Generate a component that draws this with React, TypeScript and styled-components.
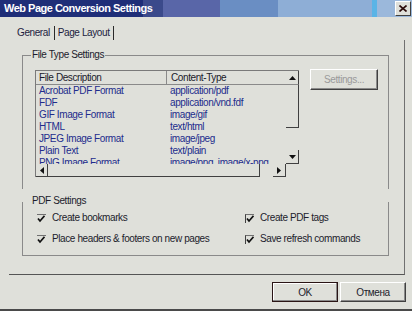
import React from 'react';
import styled, { createGlobalStyle } from 'styled-components';

const GlobalStyle = createGlobalStyle`
  html, body { margin: 0; padding: 0; background: #dfe0da; }
  body { font-family: "Liberation Sans", Arial, sans-serif; font-size: 10px; }
  * { box-sizing: border-box; }
`;

const Window = styled.div`
  width: 412px;
  height: 311px;
  display: flex;
  flex-direction: column;
  background: #dfe0da;
  border-bottom: 2px solid #4a4a4a;
  overflow: hidden;
  color: #1d1d2b;
  letter-spacing: -0.4px;
`;

const TitleBar = styled.div`
  height: 17px;
  flex: none;
  display: flex;
  align-items: flex-start;
  background: linear-gradient(
    to right,
    #1f2e78 0 143px,
    #3b4a8b 143px 163px,
    #5966a8 163px 220px,
    #6a8ec3 220px 278px,
    #8eaed6 278px 372px,
    #5ab4e6 372px 377px,
    #9bb8db 377px
  );
`;

const Title = styled.div`
  flex: 1;
  padding-left: 4px;
  line-height: 17px;
  color: #ffffff;
  font-weight: bold;
  font-size: 11px;
  letter-spacing: -0.5px;
`;

const CloseButton = styled.button`
  width: 16px;
  height: 15px;
  margin: 1px 1px 0 0;
  padding: 0;
  background: #dfe0da;
  border: 1px solid;
  border-color: #ffffff #404040 #404040 #ffffff;
  display: flex;
  align-items: center;
  justify-content: center;
`;

const TabStrip = styled.div`
  height: 23px;
  flex: none;
  display: flex;
  align-items: flex-end;
  padding-left: 17px;
`;

const Tab = styled.div`
  height: 14px;
  line-height: 14px;
  padding: 0 3px;
  border-right: 1px solid #2a2a2a;
  color: #1c1c40;
  &:first-child { padding: 0 4px 0 0; }
`;

const Panel = styled.div`
  margin-left: 9px;
  width: 396px;
  height: 235px;
  flex: none;
  border-right: 1px solid #707070;
  border-bottom: 1px solid #555555;
  padding: 15px 15px 0 13px;
  display: flex;
  flex-direction: column;
`;

const GroupBox = styled.div<{ $open: 'top' | 'bottom'; $height: number; $gap?: number }>`
  height: ${p => p.$height}px;
  margin-top: ${p => p.$gap ?? 0}px;
  border: 1px solid #8a8a8a;
  ${p => (p.$open === 'bottom' ? 'border-bottom: none;' : 'border-top: none;')}
  display: flex;
  flex-direction: column;
`;

const Caption = styled.div`
  align-self: flex-start;
  margin: -7px 0 0 8px;
  padding: 0 1px;
  line-height: 12px;
  background: #dfe0da;
  color: #1c1c2c;
`;

const FileTypeBody = styled.div`
  display: flex;
  align-items: flex-start;
  gap: 11px;
  margin-top: 9px;
  padding-left: 12px;
`;

const ListBox = styled.div`
  width: 264px;
  height: 107px;
  display: grid;
  grid-template-columns: 1fr 13px;
  grid-template-rows: 1fr 13px;
  border-top: 1px solid #7a7a7a;
  border-left: 1px solid #7a7a7a;
`;

const ListMain = styled.div`
  overflow: hidden;
  display: flex;
  flex-direction: column;
`;

const HeaderRow = styled.div`
  display: grid;
  grid-template-columns: 131px 1fr;
  height: 14px;
  flex: none;
  border-bottom: 1px solid #8a8a8a;
  color: #1a1a2a;
`;

const HeaderCell = styled.div<{ $pad: number; $divider?: boolean }>`
  line-height: 13px;
  padding-left: ${p => p.$pad}px;
  white-space: nowrap;
  overflow: hidden;
  ${p => (p.$divider ? 'border-right: 1px solid #8a8a8a;' : '')}
`;

const Row = styled.div`
  display: grid;
  grid-template-columns: 131px 1fr;
  height: 12px;
  flex: none;
  color: #222c8c;
`;

const Cell = styled.div<{ $pad: number }>`
  line-height: 12px;
  padding-left: ${p => p.$pad}px;
  white-space: nowrap;
  overflow: hidden;
`;

const VScroll = styled.div`
  display: flex;
  flex-direction: column;
`;

const ScrollButton = styled.div<{ $w?: number; $h?: number; $bottomEdge?: string }>`
  ${p => (p.$w ? `width: ${p.$w}px;` : '')}
  ${p => (p.$h ? `height: ${p.$h}px;` : '')}
  flex: none;
  display: flex;
  align-items: center;
  justify-content: center;
  border-right: 1px solid #404040;
  border-bottom: 1px solid ${p => p.$bottomEdge ?? '#404040'};
`;

const Thumb = styled.div<{ $size: number; $vertical?: boolean }>`
  ${p => (p.$vertical ? `height: ${p.$size}px;` : `flex: 1;`)}
  flex-shrink: 0;
  border-right: 1px solid #404040;
  border-bottom: 1px solid #404040;
`;

const Track = styled.div<{ $size?: number }>`
  ${p => (p.$size ? `width: ${p.$size}px; flex: none;` : 'flex: 1;')}
`;

const HScroll = styled.div`
  display: flex;
`;

const Corner = styled.div``;

const PushButton = styled.button<{ $default?: boolean; $disabled?: boolean; $w: number; $h: number }>`
  width: ${p => p.$w}px;
  height: ${p => p.$h}px;
  flex: none;
  padding: 0;
  font-family: inherit;
  font-size: 10px;
  letter-spacing: -0.4px;
  background: #dfe0da;
  color: ${p => (p.$disabled ? '#9a9a9a' : '#1c1c2c')};
  border: 1px solid;
  border-color: ${p => (p.$default ? '#2a1515' : '#ffffff #404040 #404040 #ffffff')};
  box-shadow: inset -1px -1px #8a8a8a${p => (p.$default ? ', inset 1px 1px #ffffff' : '')};
`;

const SettingsButton = styled(PushButton)`
  margin-top: -1px;
`;

const CheckGrid = styled.div`
  display: grid;
  grid-template-columns: 208px 1fr;
  row-gap: 9px;
  margin-top: 5px;
  padding-left: 14px;
`;

const CheckItem = styled.label`
  display: flex;
  align-items: center;
  gap: 6px;
  line-height: 12px;
  color: #1c1c2c;
  white-space: nowrap;
`;

const Box = styled.span<{ $corner?: boolean }>`
  width: 9px;
  height: 9px;
  flex: none;
  display: flex;
  border-top: 1px solid #707070;
  ${p => (p.$corner ? 'border-left: 1px solid #404040;' : '')}
`;

const Footer = styled.div`
  flex: 1;
  display: flex;
  justify-content: flex-end;
  align-items: flex-start;
  gap: 2px;
  padding: 7px 6px 0 0;
`;

const Arrow = ({ dir }: { dir: 'up' | 'down' | 'left' | 'right' }) => {
  const pts = {
    up: '0,4 7,4 3.5,0',
    down: '0,0 7,0 3.5,4',
    left: '4,0 4,7 0,3.5',
    right: '0,0 0,7 4,3.5',
  }[dir];
  const vertical = dir === 'up' || dir === 'down';
  return (
    <svg width={vertical ? 7 : 4} height={vertical ? 4 : 7} viewBox={vertical ? '0 0 7 4' : '0 0 4 7'}>
      <polygon points={pts} fill="#111" />
    </svg>
  );
};

const Check = () => (
  <svg width="8" height="8" viewBox="0 0 8 8">
    <polyline points="1,3.5 3,6 7.5,0.8" fill="none" stroke="#111" strokeWidth="1.7" />
  </svg>
);

const rows: [string, string][] = [
  ['Acrobat PDF Format', 'application/pdf'],
  ['FDF', 'application/vnd.fdf'],
  ['GIF Image Format', 'image/gif'],
  ['HTML', 'text/html'],
  ['JPEG Image Format', 'image/jpeg'],
  ['Plain Text', 'text/plain'],
  ['PNG Image Format', 'image/png, image/x-png'],
];

const checks: { label: string; corner: boolean }[] = [
  { label: 'Create bookmarks', corner: false },
  { label: 'Create PDF tags', corner: true },
  { label: 'Place headers & footers on new pages', corner: false },
  { label: 'Save refresh commands', corner: true },
];

export default function App() {
  return (
    <>
      <GlobalStyle />
      <Window>
        <TitleBar>
          <Title>Web Page Conversion Settings</Title>
          <CloseButton aria-label="Close">
            <svg width="8" height="7" viewBox="0 0 8 7">
              <path d="M0.5 0.5 L7.5 6.5 M7.5 0.5 L0.5 6.5" stroke="#2a0a0a" strokeWidth="1.6" />
            </svg>
          </CloseButton>
        </TitleBar>
        <TabStrip>
          <Tab>General</Tab>
          <Tab>Page Layout</Tab>
        </TabStrip>
        <Panel>
          <GroupBox $open="bottom" $height={134}>
            <Caption>File Type Settings</Caption>
            <FileTypeBody>
              <ListBox>
                <ListMain>
                  <HeaderRow>
                    <HeaderCell $pad={3} $divider>File Description</HeaderCell>
                    <HeaderCell $pad={4}>Content-Type</HeaderCell>
                  </HeaderRow>
                  {rows.map(([d, t]) => (
                    <Row key={d}>
                      <Cell $pad={3}>{d}</Cell>
                      <Cell $pad={3}>{t}</Cell>
                    </Row>
                  ))}
                </ListMain>
                <VScroll>
                  <ScrollButton $h={14} $bottomEdge="#8a8a8a">
                    <Arrow dir="up" />
                  </ScrollButton>
                  <Thumb $vertical $size={43} />
                  <Track />
                  <ScrollButton $h={14}>
                    <Arrow dir="down" />
                  </ScrollButton>
                </VScroll>
                <HScroll>
                  <ScrollButton $w={12}>
                    <Arrow dir="left" />
                  </ScrollButton>
                  <Thumb $size={0} />
                  <Track $size={13} />
                  <ScrollButton $w={13}>
                    <Arrow dir="right" />
                  </ScrollButton>
                </HScroll>
                <Corner />
              </ListBox>
              <SettingsButton $disabled $w={68} $h={21}>Settings...</SettingsButton>
            </FileTypeBody>
          </GroupBox>
          <GroupBox $open="top" $height={54} $gap={13}>
            <Caption>PDF Settings</Caption>
            <CheckGrid>
              {checks.map(c => (
                <CheckItem key={c.label}>
                  <Box $corner={c.corner}>
                    <Check />
                  </Box>
                  {c.label}
                </CheckItem>
              ))}
            </CheckGrid>
          </GroupBox>
        </Panel>
        <Footer>
          <PushButton $default $w={66} $h={20}>OK</PushButton>
          <PushButton $w={66} $h={20}>Отмена</PushButton>
        </Footer>
      </Window>
    </>
  );
}
